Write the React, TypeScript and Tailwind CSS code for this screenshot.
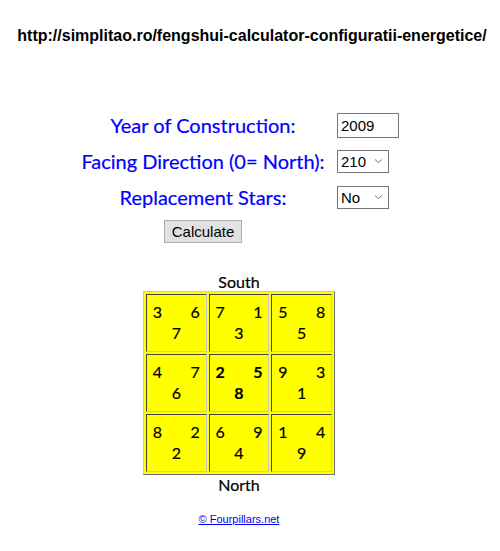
import { useState } from 'react'

type Cell = { a: number; b: number; c: number; bold?: boolean }

// flying star chart, south on top
const grid: Cell[][] = [
  [
    { a: 3, b: 6, c: 7 },
    { a: 7, b: 1, c: 3 },
    { a: 5, b: 8, c: 5 },
  ],
  [
    { a: 4, b: 7, c: 6 },
    { a: 2, b: 5, c: 8, bold: true },
    { a: 9, b: 3, c: 1 },
  ],
  [
    { a: 8, b: 2, c: 2 },
    { a: 6, b: 9, c: 4 },
    { a: 1, b: 4, c: 9 },
  ],
]

const labelCls =
  "w-[266px] text-center text-[20px] leading-none text-[#0000ff] font-['Lato',sans-serif] [-webkit-text-stroke:0.2px_#0000ff]"

const Chevron = () => (
  <svg
    className="pointer-events-none absolute right-[6px] top-1/2 -translate-y-1/2"
    width="9"
    height="6"
    viewBox="0 0 9 6"
  >
    <path d="M1 1.5 L4.5 4.5 L8 1.5" fill="none" stroke="#777" strokeWidth="1" />
  </svg>
)

const StarCell = ({ cell }: { cell: Cell }) => (
  <div className="flex h-[58px] flex-col items-center border border-t-[#444] border-l-[#444] border-b-[#c8c8c8] border-r-[#c8c8c8] pt-[6px]">
    <div
      className={`flex h-[21px] w-[47px] justify-between leading-[21px] ${
        cell.bold ? 'font-bold' : ''
      }`}
    >
      <span>{cell.a}</span>
      <span>{cell.b}</span>
    </div>
    <div className={`h-[21px] leading-[21px] ${cell.bold ? 'font-bold' : ''}`}>
      {cell.c}
    </div>
  </div>
)

export default function App() {
  const [year, setYear] = useState('2009')
  const [facing, setFacing] = useState('210')
  const [replace, setReplace] = useState('No')

  return (
    <div className="h-[551px] w-[500px] bg-white text-black">
      <div className="pl-[4px] pt-[26px] text-center text-[16px] font-bold leading-[20px] font-['Liberation_Sans',Arial,sans-serif]">
        http://simplitao.ro/fengshui-calculator-configuratii-energetice/
      </div>

      <div className="mt-[61px] flex flex-col">
        <div className="flex h-[36px] items-center">
          <div className={`ml-[70px] ${labelCls}`}>Year of Construction:</div>
          <input
            value={year}
            onChange={(e) => setYear(e.target.value)}
            className="ml-[1px] h-[25px] w-[62px] border border-[#767676] px-[3px] text-[15px] font-['Liberation_Sans',Arial,sans-serif] outline-none"
          />
        </div>
        <div className="flex h-[36px] items-center">
          <div className={`ml-[70px] ${labelCls}`}>Facing Direction (0= North):</div>
          <div className="relative ml-[1px]">
            <select
              value={facing}
              onChange={(e) => setFacing(e.target.value)}
              className="h-[23px] w-[52px] appearance-none border border-[#767676] bg-white pl-[3px] text-[15px] font-['Liberation_Sans',Arial,sans-serif] outline-none"
            >
              <option>0</option>
              <option>210</option>
            </select>
            <Chevron />
          </div>
        </div>
        <div className="flex h-[36px] items-center">
          <div className={`ml-[70px] ${labelCls}`}>Replacement Stars:</div>
          <div className="relative ml-[1px]">
            <select
              value={replace}
              onChange={(e) => setReplace(e.target.value)}
              className="h-[23px] w-[52px] appearance-none border border-[#767676] bg-white pl-[3px] text-[15px] font-['Liberation_Sans',Arial,sans-serif] outline-none"
            >
              <option>No</option>
              <option>Yes</option>
            </select>
            <Chevron />
          </div>
        </div>

        <div className="mt-[5px] flex">
          <button className="ml-[164px] h-[23px] w-[78px] border border-[#adadad] bg-[#e1e1e1] text-[15px] leading-none font-['Liberation_Sans',Arial,sans-serif]">
            Calculate
          </button>
        </div>
      </div>

      <div className="ml-[143px] mt-[29px] flex w-[192px] flex-col items-center text-[16px] font-['Lato',sans-serif] [-webkit-text-stroke:0.2px_#000]">
        <div className="h-[19px] leading-[19px]">South</div>
        <div className="grid w-[192px] grid-cols-3 gap-[2px] border border-t-[#c8c8c8] border-l-[#c8c8c8] border-b-[#6e6e6e] border-r-[#6e6e6e] bg-[#ffff00] p-[2px]">
          {grid.flat().map((cell, i) => (
            <StarCell key={i} cell={cell} />
          ))}
        </div>
        <div className="h-[20px] leading-[20px]">North</div>
        <a
          href="#"
          className="mt-[17px] text-[11px] leading-[14px] text-[#0000ee] underline font-['Liberation_Sans',Arial,sans-serif] [-webkit-text-stroke:0]"
        >
          © Fourpillars.net
        </a>
      </div>
    </div>
  )
}
